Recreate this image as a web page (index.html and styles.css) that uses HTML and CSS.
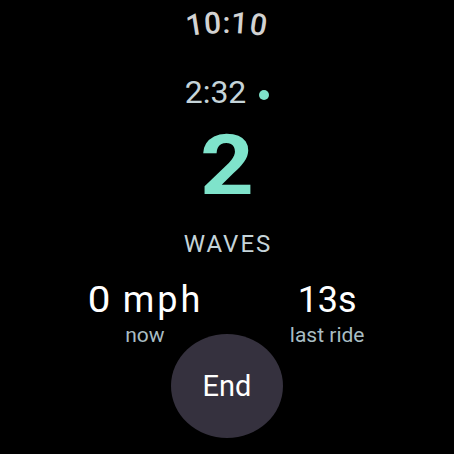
FILE: index.html
```html
<!DOCTYPE html>
<html>
<head>
<meta charset="utf-8">
<link rel="stylesheet" href="styles.css">
</head>
<body>
<div class="screen">
  <div class="clock"><span class="c c1">1</span><span class="c c2">0</span><span class="c c3">:</span><span class="c c4">1</span><span class="c c5">0</span></div>
  <div class="timer">2:32<span class="dot"></span></div>
  <div class="count"><span class="digit">2</span></div>
  <div class="unit">WAVES</div>
  <div class="stats">
    <div class="stat">
      <div class="value"><span class="zero">0</span><span class="sp"></span><span class="mph">mph</span></div>
      <div class="caption">now</div>
    </div>
    <div class="stat">
      <div class="value">13s</div>
      <div class="caption">last ride</div>
    </div>
  </div>
  <button class="end">End</button>
</div>
</body>
</html>
```
FILE: styles.css
```css
html, body {
  margin: 0;
  padding: 0;
  background: #000;
}
.screen {
  width: 454px;
  height: 454px;
  overflow: hidden;
  display: flex;
  flex-direction: column;
  align-items: center;
  font-family: Roboto, "Liberation Sans", sans-serif;
  color: #fff;
}
.clock {
  margin-top: 8px;
  font-size: 30px;
  line-height: 30px;
  color: #d2d2d2;
  font-weight: 500;
  letter-spacing: 1px;
}
.c { display: inline-block; }
.c1 { transform: translateY(2px) rotate(-9deg); }
.c2 { transform: translateY(0.5px) rotate(-4deg); }
.c3 { transform: rotate(0deg); }
.c4 { transform: translateY(0.5px) rotate(4deg); }
.c5 { transform: translateY(2px) rotate(9deg); }
.timer {
  margin-top: 38px;
  font-size: 32px;
  line-height: 32px;
  color: #c5d4d9;
  display: flex;
  align-items: center;
}
.dot {
  width: 10px;
  height: 10px;
  border-radius: 50%;
  background: #7fe3cb;
  margin-left: 13px;
  margin-top: 6px;
}
.count {
  margin-top: 16px;
  font-size: 84px;
  line-height: 84px;
  font-weight: 700;
  color: #7fe3cb;
}
.digit {
  display: inline-block;
  transform: scaleX(1.12);
}
.unit {
  margin-top: 24px;
  font-size: 24px;
  line-height: 24px;
  color: #c5d4d9;
  letter-spacing: 2px;
  padding-left: 2px;
}
.stats {
  margin-top: 26px;
  width: 100%;
  display: flex;
  justify-content: space-evenly;
}
.stat {
  display: flex;
  flex-direction: column;
  align-items: center;
}
.value {
  font-size: 36px;
  line-height: 36px;
  color: #fff;
  display: flex;
}
.zero {
  display: inline-block;
  transform: scaleX(1.12);
}
.sp { width: 13px; }
.mph {
  letter-spacing: 3px;
  margin-right: -3px;
}
.caption {
  margin-top: 7px;
  font-size: 21px;
  line-height: 21px;
  color: #a9bdc3;
}
.end {
  margin-top: -12px;
  width: 112px;
  height: 104px;
  border: none;
  border-radius: 50%;
  background: #35313e;
  color: #fff;
  font-family: Roboto, "Liberation Sans", sans-serif;
  font-size: 29px;
  padding: 0;
}
```
